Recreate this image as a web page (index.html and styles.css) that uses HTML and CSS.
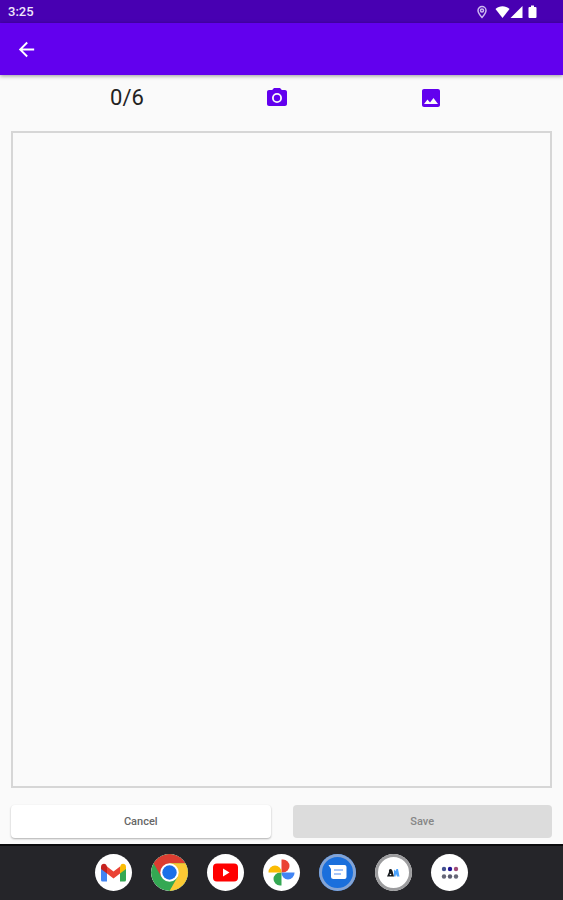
FILE: index.html
```html
<!DOCTYPE html>
<html lang="en">
<head>
    <meta charset="UTF-8">
    <meta name="viewport" content="width=device-width, initial-scale=1.0">
    <title>Add Photos</title>
    <link rel="stylesheet" href="styles.css">
</head>
<body>
    <div class="status-bar">
        <span class="time">3:25</span>
        <div class="status-icons">
            <svg class="location" viewBox="0 0 12 14" width="12" height="14">
                <path d="M6 1.5a4 4 0 0 0-4 4C2 8.2 6 12.5 6 12.5s4-4.3 4-7a4 4 0 0 0-4-4z" fill="none" stroke="#cdb8f0" stroke-width="1.5"/>
                <circle cx="6" cy="5.5" r="1.5" fill="none" stroke="#cdb8f0" stroke-width="1.5"/>
            </svg>
            <svg viewBox="0 0 15 14" width="15" height="14">
                <path d="M7.5 13L.5 4C4.500.3 10.5.3 14.5 4z" fill="#fff"/>
            </svg>
            <svg viewBox="0 0 13 14" width="13" height="14">
                <path d="M12.5 1v12H.5z" fill="#fff"/>
            </svg>
            <svg class="battery" viewBox="0 0 9 14" width="9" height="14">
                <path d="M3 .5h3V2h1.500q1 0 1 1v9q0 1-1 1h-6q-1 0-1-1V3q0-1 1-1H3z" fill="#fff"/>
            </svg>
        </div>
    </div>

    <header class="toolbar">
        <button class="icon-btn" type="button" aria-label="Back">
            <svg viewBox="0 0 24 24" width="23" height="23">
                <path d="M20 11H7.83l5.59-5.59L12 4l-8 8 8 8 1.41-1.41L7.83 13H20z" fill="#fff"/>
            </svg>
        </button>
    </header>

    <main class="content">
        <div class="actions">
            <span class="counter">0/6</span>
            <button class="icon-btn" type="button" aria-label="Take photo">
                <svg viewBox="0 0 24 24" width="24" height="24">
                    <circle cx="12" cy="12" r="3.2"/>
                    <path d="M9 2L7.17 4H4c-1.1 0-2 .9-2 2v12c0 1.1.9 2 2 2h16c1.1 0 2-.9 2-2V6c0-1.1-.9-2-2-2h-3.17L15 2zm3 15a5 5 0 1 1 0-10 5 5 0 0 1 0 10z"/>
                </svg>
            </button>
            <button class="icon-btn" type="button" aria-label="Choose image">
                <svg viewBox="0 0 24 24" width="24" height="24">
                    <path d="M21 19V5c0-1.1-.9-2-2-2H5c-1.1 0-2 .9-2 2v14c0 1.1.9 2 2 2h14c1.1 0 2-.9 2-2zM8.5 13.5l2.5 3.01L14.5 12l4.5 6H5z"/>
                </svg>
            </button>
        </div>

        <div class="photo-area"></div>

        <div class="buttons">
            <button class="btn cancel" type="button">Cancel</button>
            <button class="btn save" type="button" disabled>Save</button>
        </div>
    </main>

    <nav class="dock">
        <a href="#" class="app" aria-label="Gmail">
            <svg viewBox="0 0 37 37">
                <path d="M6 13v13q0 1.5 1.5 1.5H12V16z" fill="#4285f4"/>
                <path d="M31 13v13q0 1.5-1.5 1.5H25V16z" fill="#34a853"/>
                <path d="M25 13v6.5l6-4.5v-2c0-3-3-4-5-2.500z" fill="#fbbc04"/>
                <path d="M12 12.5v7l6.5 5 6.5-5v-7l-6.5 5z" fill="#ea4335"/>
                <path d="M6 13v2l6 4.5v-7l-1-2C9 9 6 10 6 13z" fill="#c5221f"/>
            </svg>
        </a>
        <a href="#" class="app" aria-label="Chrome">
            <svg viewBox="0 0 37 37">
                <circle cx="18.5" cy="18.5" r="18.5" fill="#34a853"/>
                <path d="M18.5 18.5L2.5 9.25A18.5 18.5 0 0 1 34.5 9.25H18.5z" fill="#dc3d31"/>
                <path d="M2.5 9.25L10.5 23.1 18.5 9.25z" fill="#dc3d31"/>
                <path d="M18.5 9.25h16A18.5 18.5 0 0 1 18.5 37l8-13.9z" fill="#fbc934"/>
                <circle cx="18.5" cy="18.5" r="9.2" fill="#fff"/>
                <circle cx="18.5" cy="18.5" r="7.2" fill="#1a6fe8"/>
            </svg>
        </a>
        <a href="#" class="app" aria-label="YouTube">
            <svg viewBox="0 0 37 37">
                <rect x="6" y="9.5" width="25" height="18" rx="4" fill="#f00"/>
                <path d="M16 14.5v8l6.5-4z" fill="#fff"/>
            </svg>
        </a>
        <a href="#" class="app" aria-label="Photos">
            <svg viewBox="0 0 37 37">
                <path d="M18.5 5.5h1.500a6.5 6.5 0 0 1 0 13h-1.500z" fill="#ea4335"/>
                <path d="M31.5 18.5v.5a6.5 6.5 0 0 1-13 0v-.5z" fill="#4285f4"/>
                <path d="M18.5 31.5H17a6.5 6.5 0 0 1 0-13h1.500z" fill="#34a853"/>
                <path d="M5.500 18.500V18a6.500 6.500 0 0 1 13 0v.5z" fill="#fbbc04"/>
            </svg>
        </a>
        <a href="#" class="app messages" aria-label="Messages">
            <svg viewBox="0 0 37 37">
                <path d="M9.5 11h16q2 0 2 2v10q0 2-2 2h-11q-2.500 0-2.500-2.500V15z" fill="#fff"/>
                <path d="M15 16h9M15 20h7" stroke="#8ab4f8" stroke-width="1.5"/>
            </svg>
        </a>
        <a href="#" class="app recent" aria-label="Recent app">
            <svg viewBox="0 0 37 37">
                <path d="M12 22.5l2-4.500q-.5-3 1.500-3 1.500 0 2 2l1.500 5.500z" fill="#15191d"/>
                <circle cx="15.500" cy="20.500" r=".8" fill="#fff"/>
                <path d="M19 15.500l1.500 1.500 1-2h1.500l1.500 7.500h-2.500l-1-2.500-.5 2.500h-1.500z" fill="#4aa3ff"/>
            </svg>
        </a>
        <a href="#" class="app" aria-label="All apps">
            <svg viewBox="0 0 37 37">
                <circle cx="13" cy="15" r="2.2" fill="#42508f"/>
                <circle cx="19" cy="15" r="2.2" fill="#1d1397"/>
                <circle cx="25" cy="15" r="2.2" fill="#a04c78"/>
                <circle cx="13" cy="22.5" r="2.2" fill="#666777"/>
                <circle cx="19" cy="22.5" r="2.2" fill="#5b5c70"/>
                <circle cx="25" cy="22.5" r="2.2" fill="#666777"/>
            </svg>
        </a>
    </nav>
</body>
</html>
```

FILE: styles.css
```css
* {
    box-sizing: border-box;
}

body {
    margin: 0;
    min-height: 100vh;
    display: flex;
    flex-direction: column;
    font-family: Roboto, sans-serif;
    background-color: #fafafa;
    color: #222;
}

svg {
    display: block;
}

/* Status bar */
.status-bar {
    display: flex;
    justify-content: space-between;
    align-items: center;
    height: 23px;
    padding: 0 26px 0 8px;
    background-color: #4800b2;
}

.time {
    font-size: 13px;
    font-weight: 500;
    line-height: 24px;
    color: #eee6fa;
}

.status-icons {
    display: flex;
    align-items: center;
}

.location {
    margin-right: 7px;
}

.battery {
    margin-left: 5px;
}

/* Toolbar */
.toolbar {
    display: flex;
    align-items: center;
    height: 52px;
    padding: 0 15px;
    background-color: #6200ee;
    box-shadow: 0 1px 4px rgba(0, 0, 0, 0.4);
}

.icon-btn {
    padding: 0;
    border: none;
    background: none;
    color: #6200ee;
    cursor: pointer;
}

.icon-btn svg {
    fill: currentColor;
}

/* Content */
.content {
    flex: 1;
    display: flex;
    flex-direction: column;
    padding: 0 11px 6px;
}

.actions {
    display: grid;
    grid-template-columns: 154fr 145fr 164fr;
    justify-items: center;
    align-items: center;
    height: 46px;
    margin: 0 39px 10px;
}

.counter {
    font-size: 22px;
    line-height: 24px;
}

.photo-area {
    flex: 1;
    border: 2px solid #d6d6d6;
}

.buttons {
    display: grid;
    grid-template-columns: 1fr 1fr;
    gap: 22px;
    margin-top: 17px;
}

.btn {
    height: 33px;
    border: none;
    border-radius: 4px;
    font-family: inherit;
    font-size: 11px;
    font-weight: 500;
}

.cancel {
    background-color: #fff;
    color: #666;
    box-shadow: 0 1px 2px rgba(0, 0, 0, 0.3);
    cursor: pointer;
}

.save {
    background-color: #dcdcdc;
    color: #868686;
}

/* Dock */
.dock {
    display: flex;
    justify-content: center;
    align-items: center;
    gap: 19px;
    height: 56px;
    padding-bottom: 2px;
    border-top: 2px solid #0b0b0d;
    background-color: #252529;
}

.app {
    width: 37px;
    height: 37px;
    border-radius: 50%;
    overflow: hidden;
    background-color: #fff;
}

.messages {
    background-color: #1a6fdc;
    box-shadow: inset 0 0 0 3px #84a4d4;
}

.recent {
    box-shadow: inset 0 0 0 3px #9c9c9e;
}
```
